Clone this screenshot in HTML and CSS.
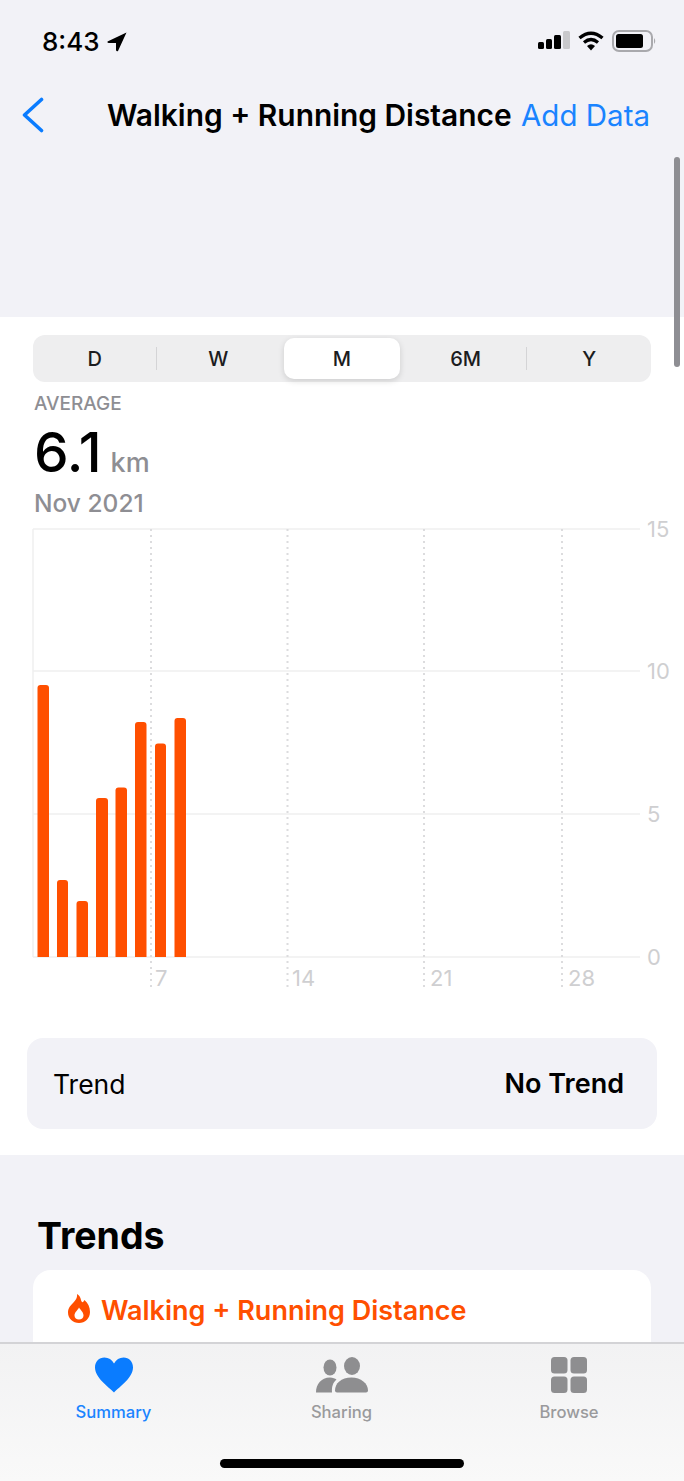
FILE: index.html
```html
<!DOCTYPE html>
<html lang="en">
<head>
<meta charset="UTF-8">
<meta name="viewport" content="width=device-width, initial-scale=1.0">
<title>Walking + Running Distance</title>
<link rel="stylesheet" href="styles.css">
</head>
<body>

<div class="screen">
  <div class="status-bar">
    <div class="status-time">
      <span>8:43</span>
      <svg class="location" width="20" height="20" viewBox="0 0 20 20"><path d="M19.5 0.5 L0.5 9.5 Q0 11 2 11 L9 11 L9 18 Q9.5 20 11 19 Z" fill="#000"/></svg>
    </div>
    <div class="status-icons">
      <svg class="signal" width="33" height="20" viewBox="0 0 33 20">
        <rect x="0" y="11" width="6" height="7" rx="1.5" fill="#000"/>
        <rect x="8" y="8" width="6" height="10" rx="1.5" fill="#000"/>
        <rect x="16" y="4" width="7" height="14" rx="1.5" fill="#000"/>
        <rect x="25" y="0" width="7" height="18" rx="1.5" fill="#c9c9cc"/>
      </svg>
      <svg width="26" height="20" viewBox="0 0 26 20">
        <path d="M1.5 7 Q13 -2.5 24.5 7" fill="none" stroke="#000" stroke-width="3.4"/>
        <path d="M6 11.5 Q13 5.5 20 11.5" fill="none" stroke="#000" stroke-width="3.2"/>
        <path d="M9 15 Q13 11.5 17 15 L13 19.5 Z" fill="#000"/>
      </svg>
      <svg width="45" height="22" viewBox="0 0 45 22">
        <rect x="1" y="1" width="39" height="20" rx="6" fill="none" stroke="#a9a9ad" stroke-width="2"/>
        <rect x="4" y="4" width="27" height="14" rx="2.500" fill="#000"/>
        <path d="M42 8 Q44.500 11 42 14 Z" fill="#a9a9ad"/>
      </svg>
    </div>
  </div>

  <div class="nav-bar">
    <svg class="back" width="24" height="36" viewBox="0 0 24 36"><path d="M20.500 2.500 L3.500 18 L20.500 33.500" fill="none" stroke="#0a7cff" stroke-width="3.600" stroke-linecap="round" stroke-linejoin="round"/></svg>
    <div class="nav-title">Walking + Running Distance</div>
    <div class="nav-action">Add Data</div>
  </div>

  <div class="nav-gap"></div>

  <div class="chart-section">
    <div class="segments">
      <div class="segment divider">D</div>
      <div class="segment">W</div>
      <div class="segment selected">M</div>
      <div class="segment divider">6M</div>
      <div class="segment">Y</div>
    </div>

    <div class="stat-label">AVERAGE</div>
    <div class="stat-value">6.1<span class="stat-unit">km</span></div>
    <div class="stat-date">Nov 2021</div>

    <svg class="chart" width="684" height="482" viewBox="0 -12 684 482">
      <g class="grid-line">
        <line x1="33" y1="1" x2="640" y2="1"/>
        <line x1="33" y1="143" x2="640" y2="143"/>
        <line x1="33" y1="286" x2="640" y2="286"/>
        <line x1="33" y1="429" x2="640" y2="429"/>
        <line x1="33" y1="1" x2="33" y2="429"/>
      </g>
      <g class="grid-dots">
        <line x1="151" y1="1" x2="151" y2="461"/>
        <line x1="287.500" y1="1" x2="287.500" y2="461"/>
        <line x1="424" y1="1" x2="424" y2="461"/>
        <line x1="562" y1="1" x2="562" y2="461"/>
      </g>
      <g class="bars">
        <path d="M37.500 429 V160 Q37.500 157 40.500 157 H46 Q49 157 49 160 V429 Z"/>
        <path d="M57 429 V355 Q57 352 60 352 H65 Q68 352 68 355 V429 Z"/>
        <path d="M76.500 429 V376 Q76.500 373 79.500 373 H85 Q88 373 88 376 V429 Z"/>
        <path d="M96 429 V273 Q96 270 99 270 H105 Q108 270 108 273 V429 Z"/>
        <path d="M115.500 429 V262.500 Q115.500 259.500 118.500 259.500 H124 Q127 259.500 127 262.500 V429 Z"/>
        <path d="M135 429 V197 Q135 194 138 194 H143.500 Q146.500 194 146.500 197 V429 Z"/>
        <path d="M155 429 V218.500 Q155 215.500 158 215.500 H163 Q166 215.500 166 218.500 V429 Z"/>
        <path d="M174.500 429 V193 Q174.500 190 177.500 190 H183 Q186 190 186 193 V429 Z"/>
      </g>
      <g class="axis-text">
        <text x="647" y="9">15</text>
        <text x="647" y="151">10</text>
        <text x="647" y="294">5</text>
        <text x="647" y="437">0</text>
        <text x="155" y="458">7</text>
        <text x="292" y="458">14</text>
        <text x="430" y="458">21</text>
        <text x="568" y="458">28</text>
      </g>
    </svg>

    <div class="trend-row">
      <span>Trend</span>
      <span class="trend-value">No Trend</span>
    </div>
  </div>

  <div class="trends">
    <h2>Trends</h2>
    <div class="trend-card">
      <svg width="24" height="29" viewBox="0 0 24 29">
        <path fill-rule="evenodd" fill="#ff4f00" d="M10 0 C12 1 13.500 3 14 6 C14.500 8 15.500 9 16.500 7.500 L17.500 6 C21 9 23 13 23 18 C23 24.500 18 29 12 29 C6 29 1 24.500 1 18.500 C1 14 3.500 11.500 6 9 C8.500 6.500 10.500 4 10 0 Z M12 13.500 C11 16 7.500 18 7.500 21.500 C7.500 24 9.500 25.500 12 25.500 C14.500 25.500 16.500 24 16.500 21.500 C16.500 18 13.500 16 12 13.500 Z"/>
      </svg>
      <span>Walking + Running Distance</span>
    </div>
  </div>

  <div class="scroll-thumb"></div>

  <div class="tab-bar">
    <div class="tab active">
      <svg width="38" height="35" viewBox="0 0 38 35"><path d="M19 35 C13 29 0 20 0 10 C0 4 4 0 9.500 0 C13.500 0 17 2 19 6 C21 2 24.500 0 28.500 0 C34 0 38 4 38 10 C38 20 25 29 19 35 Z" fill="#0a7cff"/></svg>
      <span>Summary</span>
    </div>
    <div class="tab">
      <svg width="52" height="35" viewBox="0 0 52 35" fill="#8e8e90">
        <ellipse cx="14" cy="10" rx="6.500" ry="8"/>
        <ellipse cx="36" cy="8.500" rx="8" ry="9"/>
        <path d="M0 35 C0 27 5 20 14 20 C17 20 19 21 20.500 22 C17 25 15.500 29 16 35 Z"/>
        <path d="M19 33 C19 26 25 20 35.500 20 C45 20 52 26 52 33 Q52 35 50 35 H21 Q19 35 19 33 Z"/>
      </svg>
      <span>Sharing</span>
    </div>
    <div class="tab">
      <svg width="36" height="36" viewBox="0 0 36 36" fill="#8e8e90">
        <rect x="0" y="0" width="16.500" height="16.500" rx="3.500"/>
        <rect x="19.500" y="0" width="16.500" height="16.500" rx="3.500"/>
        <rect x="0" y="19.500" width="16.500" height="16.500" rx="3.500"/>
        <rect x="19.500" y="19.500" width="16.500" height="16.500" rx="3.500"/>
      </svg>
      <span>Browse</span>
    </div>
    <div class="home-indicator"></div>
  </div>
</div>

</body>
</html>
```

FILE: styles.css
```css
* {
  box-sizing: border-box;
}

body {
  margin: 0;
  padding: 0;
  font-family: Inter, "Liberation Sans", sans-serif;
  background-color: #f2f2f7;
  color: #000;
}

.screen {
  position: relative;
  width: 684px;
  height: 1481px;
  overflow: hidden;
  background-color: #f2f2f7;
}

/* status bar */
.status-bar {
  height: 84px;
  padding: 28px 27px 0 42px;
  display: flex;
  justify-content: space-between;
  align-items: flex-start;
}

.status-time {
  display: flex;
  align-items: center;
  gap: 7px;
  font-size: 26px;
  font-weight: 500;
  line-height: 28px;
}

.status-icons {
  display: flex;
  align-items: center;
  gap: 8px;
  padding-top: 2px;
}

.signal {
  margin-right: -1px;
}

/* nav */
.nav-bar {
  height: 62px;
  padding: 0 34px 0 21px;
  display: flex;
  align-items: center;
}

.nav-title {
  margin-left: 62px;
  font-size: 29.900px;
  font-weight: 600;
  white-space: nowrap;
}

.nav-action {
  margin-left: auto;
  font-size: 29.500px;
  color: #1a84ff;
  white-space: nowrap;
}

.nav-gap {
  height: 171px;
}

/* chart area */
.chart-section {
  height: 838px;
  padding-top: 18px;
  background-color: #fff;
}

.segments {
  display: grid;
  grid-template-columns: repeat(5, 1fr);
  width: 618px;
  height: 47px;
  margin-left: 33px;
  padding: 3px 0;
  border-radius: 12px;
  background-color: #eeeeef;
}

.segment {
  position: relative;
  display: flex;
  align-items: center;
  justify-content: center;
  font-size: 20px;
  font-weight: 500;
  color: #1c1c1e;
}

.segment.divider::after {
  content: "";
  position: absolute;
  top: 9px;
  bottom: 9px;
  right: 0;
  width: 1px;
  background-color: #d4d4d6;
}

.segment.selected {
  margin: 0 4px;
  border-radius: 10px;
  background-color: #fff;
  box-shadow: 0 2px 6px rgba(0, 0, 0, 0.14);
}

.stat-label {
  margin: 12px 0 0 34px;
  font-size: 19px;
  font-weight: 500;
  line-height: 20px;
  color: #8e8e93;
}

.stat-value {
  margin: 8px 0 0 34px;
  font-size: 55px;
  font-weight: 500;
  line-height: 60px;
}

.stat-unit {
  margin-left: 9px;
  font-size: 27px;
  color: #8e8e93;
}

.stat-date {
  margin: -5px 0 0 34px;
  font-size: 24.500px;
  font-weight: 500;
  line-height: 30px;
  color: #8e8e93;
}

.chart {
  display: block;
  margin-top: -2px;
}

.grid-line line {
  stroke: #efefef;
  stroke-width: 1.5;
}

.grid-dots line {
  stroke: #dcdcde;
  stroke-width: 2;
  stroke-dasharray: 2 4;
}

.bars path {
  fill: #ff4f00;
}

.axis-text text {
  font-size: 22px;
  fill: #cfcfd1;
}

.trend-row {
  display: flex;
  justify-content: space-between;
  align-items: center;
  width: 630px;
  height: 91px;
  margin: 40px 0 0 27px;
  padding: 0 33px 0 26px;
  border-radius: 16px;
  background-color: #f2f2f7;
  font-size: 26.500px;
}

.trend-value {
  font-size: 27px;
  font-weight: 600;
}

/* trends */
.trends {
  padding: 0 33px;
}

.trends h2 {
  margin: 59px 0 12px 4px;
  font-size: 37.500px;
  font-weight: 700;
  line-height: 44px;
}

.trend-card {
  display: flex;
  align-items: flex-start;
  gap: 10px;
  height: 140px;
  padding: 24px 0 0 34px;
  border-radius: 18px;
  background-color: #fff;
  font-size: 27px;
  font-weight: 600;
  color: #ff4f00;
}

.scroll-thumb {
  position: absolute;
  top: 157px;
  right: 4px;
  width: 6px;
  height: 210px;
  border-radius: 3px;
  background-color: #8e8e93;
}

/* tab bar lies over the scrolled content */
.tab-bar {
  position: absolute;
  left: 0;
  right: 0;
  bottom: 0;
  height: 139px;
  padding-top: 13px;
  display: grid;
  grid-template-columns: 227px 229px 226px;
  align-items: start;
  border-top: 2px solid #d3d3d6;
  background: linear-gradient(#f2f2f3, #f9f9f9);
}

.tab {
  display: flex;
  flex-direction: column;
  align-items: center;
  font-size: 16.600px;
  font-weight: 500;
  color: #9a9a9c;
}

.tab svg {
  height: 36px;
}

.tab span {
  margin-top: 9px;
  line-height: 20px;
}

.tab.active {
  color: #1a84ff;
}

.home-indicator {
  position: absolute;
  left: 220px;
  bottom: 13px;
  width: 244px;
  height: 9px;
  border-radius: 5px;
  background-color: #000;
}
```
